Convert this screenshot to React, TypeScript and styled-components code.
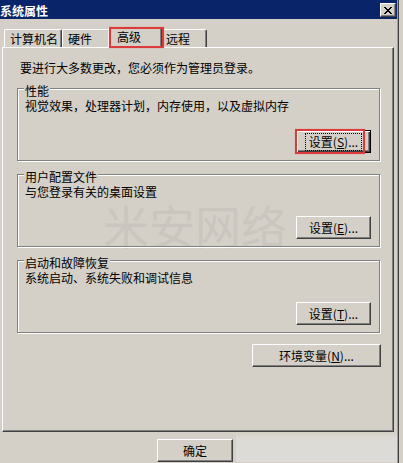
import React from 'react';
import styled, { createGlobalStyle, css } from 'styled-components';

const GlobalStyle = createGlobalStyle`
  html, body { margin: 0; padding: 0; background: #d4d0c8; overflow: hidden; }
  body {
    font-family: "Noto Sans CJK SC", "Liberation Sans", sans-serif;
    font-size: 12px;
    color: #000;
  }
`;

const Window = styled.div`
  display: flex;
  width: 403px;
  height: 463px;
  background: #d4d0c8;
  overflow: hidden;
`;

const Main = styled.div`
  width: 397px;
  flex: none;
  display: flex;
  flex-direction: column;
`;

const Edge = styled.div`
  flex: 1;
  background: linear-gradient(to right, #a09d97 0 1px, #404040 1px 2px, #d4d0c8 2px);
`;

const TitleBar = styled.div`
  height: 19px;
  flex: none;
  background: #0a246a;
  display: flex;
  align-items: center;
  justify-content: space-between;
  padding-right: 1px;
`;

const Title = styled.span`
  color: #fff;
  font-weight: bold;
  font-size: 12px;
  line-height: 14px;
  margin-top: 2px;
`;

const CloseButton = styled.div`
  box-sizing: border-box;
  width: 16px;
  height: 14px;
  background: #d4d0c8;
  border: 1px solid;
  border-color: #fff #404040 #404040 #fff;
  box-shadow: inset -1px -1px #808080;
  display: flex;
  align-items: center;
  justify-content: center;
  margin-top: 1px;
`;

const Body = styled.div`
  padding: 8px 0 0 2px;
  display: flex;
  flex-direction: column;
`;

const TabRow = styled.div`
  display: flex;
  align-items: flex-end;
  height: 20px;
  padding-left: 2px;
`;

const Tab = styled.div<{ $w: number; $active?: boolean; $marked?: boolean }>`
  box-sizing: border-box;
  position: relative;
  width: ${(p) => p.$w}px;
  height: ${(p) => (p.$active ? 21 : 18)}px;
  margin: ${(p) => (p.$active ? '0 -2px -1px -2px' : '0')};
  z-index: ${(p) => (p.$active ? 2 : 1)};
  background: #d4d0c8;
  border-top: 1px solid #fff;
  border-left: 1px solid #fff;
  border-right: 1px solid #404040;
  box-shadow: inset -1px 0 #808080;
  border-radius: 2px 2px 0 0;
  padding: 1px 0 0 ${(p) => (p.$active ? 8 : 5)}px;
  line-height: 16px;
  white-space: nowrap;
  ${(p) =>
    p.$marked &&
    css`
      &::after {
        content: '';
        position: absolute;
        left: 0px;
        right: -3px;
        top: -1px;
        bottom: 0px;
        border: 2px solid #dd3b3b;
        box-shadow: 0 0 1px rgba(221, 59, 59, 0.5);
      }
    `}
`;

const Panel = styled.div`
  box-sizing: border-box;
  position: relative;
  width: 392px;
  height: 385px;
  border: 1px solid;
  border-color: #fff #404040 #404040 #fff;
  box-shadow: inset -1px -1px #808080;
  padding: 12px 12px 0 14px;
  display: flex;
  flex-direction: column;
`;

const Intro = styled.div`
  line-height: 16px;
  padding-left: 3px;
  white-space: nowrap;
`;

const Group = styled.div<{ $first?: boolean }>`
  box-sizing: border-box;
  margin: ${(p) => (p.$first ? 12 : 13)}px 1px 0 0;
  height: 73px;
  border: 1px solid #808080;
  box-shadow: 1px 1px 0 #fff, inset 1px 1px 0 #fff;
  display: flex;
  flex-direction: column;
  align-items: flex-start;
  position: relative;
  z-index: 1;
`;

const GroupLabel = styled.span`
  margin: -5px 0 0 6px;
  padding: 0 1px;
  line-height: 13px;
  background: #d4d0c8;
  white-space: nowrap;
`;

const GroupText = styled.div`
  padding-left: 7px;
  margin-top: 2px;
  line-height: 14px;
  white-space: nowrap;
`;

const ButtonRow = styled.div<{ $top: number; $right: number }>`
  align-self: stretch;
  display: flex;
  justify-content: flex-end;
  margin-top: ${(p) => p.$top}px;
  padding-right: ${(p) => p.$right}px;
`;

const Button = styled.div<{ $w: number; $default?: boolean; $marked?: boolean }>`
  box-sizing: border-box;
  position: relative;
  width: ${(p) => p.$w}px;
  height: 23px;
  background: #d4d0c8;
  display: flex;
  align-items: center;
  justify-content: center;
  line-height: 14px;
  white-space: nowrap;
  ${(p) =>
    p.$default
      ? css`
          border: 1px solid #000;
          box-shadow: inset 1px 1px #fff, inset -1px -1px #404040, inset -2px -2px #808080;
        `
      : css`
          border: 1px solid;
          border-color: #fff #404040 #404040 #fff;
          box-shadow: inset -1px -1px #808080;
        `}
  ${(p) =>
    p.$marked &&
    css`
      &::after {
        content: '';
        position: absolute;
        left: -2px;
        right: 5px;
        top: -2px;
        bottom: -2px;
        border: 2px solid #dd3b3b;
        box-shadow: 0 0 1px rgba(221, 59, 59, 0.5);
      }
    `}
`;

const Focus = styled.span`
  outline: 1px dotted #000;
  outline-offset: 1px;
  padding: 0 2px;
`;

const Watermark = styled.div`
  position: absolute;
  left: 100px;
  top: 157px;
  font-size: 46px;
  line-height: 38px;
  height: 38px;
  color: #cac6bf;
  white-space: nowrap;
  z-index: 0;
  pointer-events: none;
`;

const Footer = styled.div`
  flex: 1;
  display: flex;
  padding-top: 7px;
  padding-left: 155px;
`;

const Smudge = styled.div`
  flex: 1;
  margin: -7px 0 0 3px;
  background: linear-gradient(to bottom, #d4d0c8 0, #dcdad5 6px, #dedcd8 100%);
`;

const CloseGlyph = () => (
  <svg width="8" height="7" viewBox="0 0 8 7" shapeRendering="crispEdges">
    <path
      fill="#000"
      d="M0 0h2v1H0zM6 0h2v1H6zM1 1h2v1H1zM5 1h2v1H5zM2 2h4v1H2zM3 3h2v1H3zM2 4h4v1H2zM1 5h2v1H1zM5 5h2v1H5zM0 6h2v1H0zM6 6h2v1H6z"
    />
  </svg>
);

const Label = ({ text, k }: { text: string; k: string }) => (
  <>
    {text}(<u>{k}</u>)...
  </>
);

export default function App() {
  return (
    <>
      <GlobalStyle />
      <Window>
        <Main>
          <TitleBar>
            <Title>系统属性</Title>
            <CloseButton>
              <CloseGlyph />
            </CloseButton>
          </TitleBar>
          <Body>
            <TabRow>
              <Tab $w={58}>计算机名</Tab>
              <Tab $w={48}>硬件</Tab>
              <Tab $w={54} $active $marked>
                高级
              </Tab>
              <Tab $w={47}>远程</Tab>
            </TabRow>
            <Panel>
              <Watermark>米安网络</Watermark>
              <Intro>要进行大多数更改，您必须作为管理员登录。</Intro>
              <Group $first>
                <GroupLabel>性能</GroupLabel>
                <GroupText>视觉效果，处理器计划，内存使用，以及虚拟内存</GroupText>
                <ButtonRow $top={17} $right={8}>
                  <Button $w={75} $default $marked>
                    <Focus>
                      <Label text="设置" k="S" />
                    </Focus>
                  </Button>
                </ButtonRow>
              </Group>
              <Group>
                <GroupLabel>用户配置文件</GroupLabel>
                <GroupText>与您登录有关的桌面设置</GroupText>
                <ButtonRow $top={17} $right={8}>
                  <Button $w={75}>
                    <Label text="设置" k="E" />
                  </Button>
                </ButtonRow>
              </Group>
              <Group>
                <GroupLabel>启动和故障恢复</GroupLabel>
                <GroupText>系统启动、系统失败和调试信息</GroupText>
                <ButtonRow $top={17} $right={8}>
                  <Button $w={75}>
                    <Label text="设置" k="T" />
                  </Button>
                </ButtonRow>
              </Group>
              <ButtonRow $top={11} $right={0}>
                <Button $w={129}>
                  <Label text="环境变量" k="N" />
                </Button>
              </ButtonRow>
            </Panel>
            <Footer>
              <Button $w={76}>确定</Button>
              <Smudge />
            </Footer>
          </Body>
        </Main>
        <Edge />
      </Window>
    </>
  );
}
